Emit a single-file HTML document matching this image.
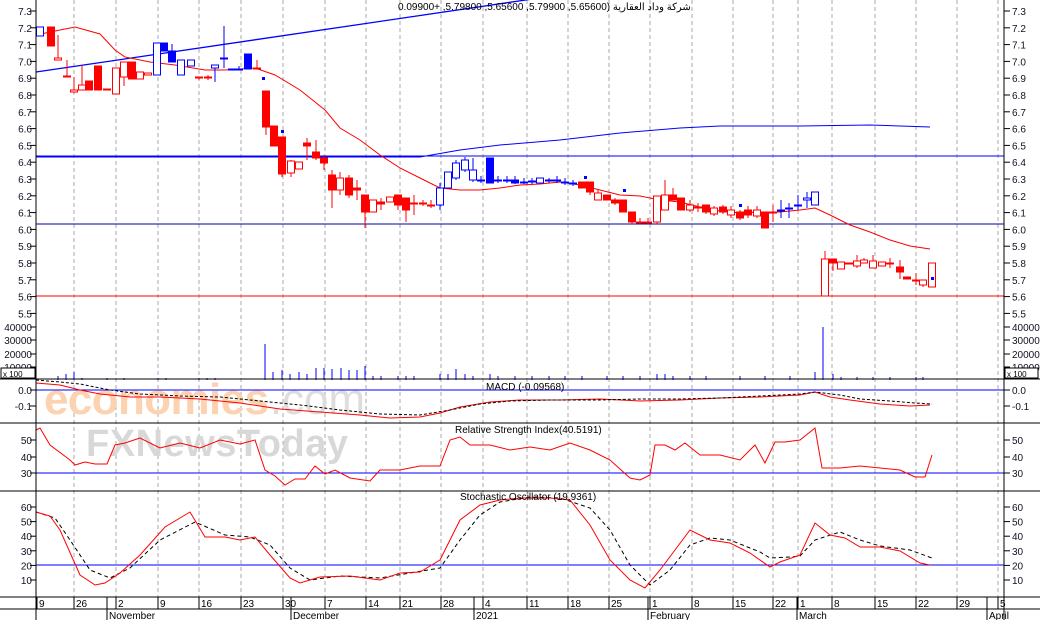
<!DOCTYPE html>
<html><head><meta charset="utf-8"><style>
html,body{margin:0;padding:0;background:#fff;}
svg{display:block;font-family:"Liberation Sans","Noto Sans CJK SC",sans-serif;}
</style></head><body>
<svg id="c" width="1040" height="620" xmlns="http://www.w3.org/2000/svg">
<rect width="1040" height="620" fill="#fff"/>
<g id="grid" stroke="#aaa" stroke-dasharray="4,3" stroke-width="1"></g>
<g>
<text x="44" y="414" fill="#fcd2b0" font-size="44" font-weight="bold" textLength="225">economies</text>
<text x="270" y="414" fill="#dddddd" font-size="44" textLength="95">.com</text>
<text x="86" y="456" fill="#d8d8d8" font-size="38" font-weight="bold" textLength="262">FXNewsToday</text>
</g>
<g id="main"></g>
<g id="axes" stroke="#000" stroke-width="1" fill="none"></g>
<g id="lbl" font-size="10" fill="#112"></g>
<text x="398" y="10" font-size="10" fill="#000">0.09900+ ,5.79800 ,5.65600 ,5.79900 ,5.65600) شركة وداد العقارية</text>
<text x="486" y="390" font-size="10" fill="#000">MACD (-0.09568)</text>
<text x="455" y="433" font-size="10" fill="#000">Relative Strength Index(40.5191)</text>
<text x="460" y="500" font-size="10" fill="#000">Stochastic Oscillator (19.9361)</text>
<rect x="1" y="368" width="34" height="10" fill="#fff" stroke="#000"/>
<text x="3" y="377" font-size="8">x 100</text>
<rect x="1005" y="368" width="33" height="10" fill="#fff" stroke="#000"/>
<text x="1007" y="377" font-size="8">x 100</text>
</svg>
<script>
var NS="http://www.w3.org/2000/svg";
function el(p,t,a,txt){var e=document.createElementNS(NS,t);for(var k in a)e.setAttribute(k,a[k]);if(txt!=null)e.textContent=txt;document.getElementById(p).appendChild(e);return e;}
var gx=[37,74,116,158,199,241,283,325,366,400,441,483,527,568,609,650,692,733,773,798,832,875,916,957,998];
gx.forEach(function(x){if(x>40&&x<1000)el('grid','line',{x1:x,y1:0,x2:x,y2:597});});
function pl(pts,col,dash,w){el('main','polyline',{points:pts.map(function(p){return p.join(',')}).join(' '),fill:'none',stroke:col,'stroke-width':w||1,'stroke-dasharray':dash||''});}
pl([[36,156],[1004,156]],'#00f');
pl([[36,224],[1004,224]],'#00a');
pl([[36,296],[1004,296]],'#f00');
pl([[36,72],[580,-8]],'#00f',null,1.3);
pl([[36,157],[420,157],[460,150],[500,145],[560,140],[620,133],[680,128],[720,126],[800,126],[870,125],[930,127]],'#00f');
pl([[36,35],[60,30],[75,27],[100,34],[115,50],[125,57],[150,62],[175,65],[205,70],[225,70],[255,68],[275,75],[300,90],[325,110],[340,128],[360,140],[380,155],[400,168],[420,178],[440,188],[460,190],[480,190],[500,188],[520,185],[540,184],[560,182],[580,185],[600,190],[620,195],[640,196],[660,200],[680,202],[700,207],[720,211],[740,213],[760,212],[780,212],[800,210],[815,208],[830,215],[850,225],[870,232],[890,240],[910,246],[930,249]],'#f00');
var C=[[40,27,36,27,36,'bh'],[51,27,46,27,46,'rf'],[58,58,60,35,60,'rh'],[67,76,77,60,77,'rf'],[74,90,92,77,93,'rh'],[82,85,90,65,90,'rh'],[89,81,90,81,90,'rf'],[98,66,90,66,90,'rf'],[107,89,90,89,90,'rf'],[116,68,94,68,94,'rh'],[124,62,77,62,86,'rh'],[132,62,79,62,79,'rf'],[140,72,79,72,79,'rh'],[148,73,75,73,75,'rh'],[157,43,75,43,75,'bh'],[164,43,51,43,51,'bf'],[172,51,62,44,62,'bf'],[181,60,75,60,75,'bh'],[191,60,66,60,66,'bh'],[199,77,78,77,80,'rf'],[208,77,78,75,80,'rf'],[215,65,68,65,82,'bh'],[224,58,59,26,68,'bf'],[232,69,70,69,70,'bf'],[239,69,70,66,70,'bf'],[248,54,69,54,69,'bf'],[257,68,69,60,69,'rf'],[266,91,127,91,135,'rf'],[274,126,146,126,146,'rf'],[282,137,174,137,177,'rf'],[291,161,173,160,177,'rh'],[299,162,169,162,169,'rh'],[307,143,146,138,160,'rf'],[316,152,158,140,160,'rf'],[324,158,163,155,170,'rf'],[332,175,190,170,208,'rf'],[340,178,190,172,195,'rh'],[349,178,195,175,198,'rf'],[357,188,190,180,200,'rf'],[365,195,212,195,228,'rf'],[373,200,212,200,212,'rh'],[381,202,204,198,210,'rf'],[390,197,202,197,202,'rh'],[398,195,205,195,210,'rf'],[406,198,210,198,222,'rf'],[414,203,204,195,215,'rf'],[423,203,204,200,206,'rf'],[431,205,206,200,208,'rf'],[440,188,205,183,210,'bh'],[448,172,188,172,188,'bh'],[456,163,178,160,180,'bh'],[465,160,170,157,172,'bh'],[473,170,180,158,182,'bh'],[481,180,181,176,183,'bf'],[490,158,183,158,183,'bf'],[498,180,181,176,183,'bf'],[507,180,181,176,183,'bf'],[515,180,183,176,184,'bf'],[524,182,183,178,184,'bf'],[532,181,182,178,184,'bf'],[540,178,183,178,183,'bh'],[549,180,181,178,183,'bf'],[557,180,181,176,183,'bf'],[565,182,183,178,185,'bf'],[573,183,184,180,186,'bf'],[582,182,188,182,188,'rf'],[590,182,192,182,195,'rf'],[598,193,200,190,200,'rh'],[607,195,200,195,200,'rf'],[615,200,203,198,205,'rf'],[623,200,212,200,212,'rf'],[632,212,222,212,224,'rf'],[640,222,223,218,224,'rf'],[648,222,223,218,224,'rf'],[657,196,222,196,224,'rh'],[665,195,210,180,210,'rh'],[673,195,200,188,200,'rf'],[681,198,210,198,210,'rf'],[690,205,210,200,212,'rh'],[698,207,208,203,212,'rf'],[706,205,212,205,214,'rf'],[714,208,214,206,216,'rh'],[723,207,212,205,214,'rf'],[731,210,215,206,218,'rh'],[740,212,218,210,220,'rf'],[748,210,215,206,218,'rf'],[757,210,216,206,218,'rh'],[765,213,228,213,228,'rf'],[773,212,213,205,222,'rf'],[781,210,211,200,218,'bf'],[789,208,209,203,218,'bf'],[798,205,206,195,210,'bf'],[807,198,200,192,208,'bh'],[815,192,205,192,205,'bh'],[825,259,296,251,296,'rh'],[833,259,263,259,271,'rf'],[841,262,269,262,269,'rh'],[849,263,264,263,264,'rf'],[857,261,266,255,268,'rh'],[864,260,263,258,263,'rh'],[873,261,268,255,268,'rh'],[882,262,266,262,266,'rh'],[890,263,264,258,268,'rf'],[900,267,272,260,279,'rf'],[907,277,279,277,279,'rf'],[916,280,281,273,285,'rf'],[923,280,285,280,287,'rh'],[932,263,287,263,287,'rh']];
C.forEach(function(c){var col=c[5][0]=='r'?'#f00':'#00f';var fill=c[5][1]=='f'?col:'#fff';
el('main','line',{x1:c[0],y1:c[3],x2:c[0],y2:c[4],stroke:col});
el('main','rect',{x:c[0]-3.5,y:c[1],width:7,height:Math.max(1,c[2]-c[1]),fill:fill,stroke:col});});
[[263,78],[282,131],[585,177],[624,190],[740,205],[932,278]].forEach(function(p){el('main','rect',{x:p[0]-1,y:p[1]-1,width:3,height:3,fill:'#00f'});});
var V=[[58,376],[66,374],[74,372],[82,378],[107,378],[124,378],[158,378],[166,378],[199,378],[207,378],[215,378],[265,344],[273,372],[282,370],[290,374],[299,372],[307,374],[316,368],[324,368],[332,369],[341,368],[349,370],[357,370],[365,366],[373,376],[381,376],[398,376],[406,376],[414,376],[440,374],[448,374],[456,369],[465,374],[473,376],[490,374],[498,376],[515,376],[532,376],[549,376],[565,376],[582,376],[607,376],[623,376],[640,376],[657,374],[665,374],[673,376],[690,376],[706,376],[740,376],[765,376],[790,376],[815,372],[823,327],[833,374],[841,377],[857,377],[873,377],[890,377],[916,377],[923,377]];
V.forEach(function(v){el('main','line',{x1:v[0],y1:380,x2:v[0],y2:v[1],stroke:'#00f'});});
pl([[36,390],[1004,390]],'#00f');
pl([[36,383],[60,385],[80,390],[100,394],[130,397],[160,397],[200,399],[240,403],[280,409],[320,412],[360,415],[390,418],[420,417],[440,413],[460,407],[490,402],[520,400],[560,400],[600,399],[640,401],[680,400],[720,398],[760,397],[800,395],[815,392],[830,397],[850,400],[880,404],[910,406],[930,405]],'#f00');
pl([[36,380],[60,382],[80,384],[110,390],[140,394],[180,396],[220,397],[260,401],[300,405],[340,410],[380,414],[420,415],[450,410],[480,404],[510,401],[550,400],[600,400],[640,399],[680,399],[720,398],[760,396],[800,394],[815,392],[840,395],[860,399],[890,401],[915,403],[932,404]],'#000','3,2');
pl([[36,473],[1004,473]],'#00f');
pl([[36,430],[40,428],[50,445],[70,460],[75,465],[85,462],[95,464],[107,464],[115,445],[125,443],[140,438],[160,448],[180,443],[200,448],[220,440],[240,444],[255,440],[265,470],[275,476],[285,485],[295,479],[305,479],[315,466],[325,474],[335,470],[350,478],[370,481],[380,470],[400,470],[420,466],[440,466],[450,440],[460,437],[470,445],[490,445],[510,450],[530,447],[550,450],[570,443],[590,450],[610,460],[630,478],[640,480],[650,475],[655,445],[665,445],[675,450],[685,443],[700,455],[720,455],[740,460],[755,445],[765,463],[775,442],[785,442],[800,440],[815,428],[822,468],[840,468],[860,466],[880,468],[900,470],[915,477],[925,477],[932,455]],'#f00');
pl([[36,565],[1004,565]],'#00f');
pl([[36,512],[55,518],[70,540],[90,570],[110,578],[130,568],[160,540],[195,522],[225,535],[250,537],[270,545],[290,568],[310,580],[340,576],[380,578],[410,573],[440,568],[460,540],[480,515],[500,502],[530,497],[560,498],[590,508],[610,530],[630,565],[650,585],[670,570],[690,545],[710,538],[730,540],[760,552],[770,558],[790,557],[800,556],[815,540],[840,532],[860,540],[880,546],[910,550],[932,558]],'#000','4,3');
pl([[36,512],[50,516],[60,530],[80,575],[95,585],[105,583],[120,573],[140,555],[165,527],[190,512],[205,537],[225,537],[240,540],[255,537],[270,555],[290,578],[300,583],[320,577],[350,576],[380,580],[400,573],[420,572],[440,560],[460,520],[480,505],[500,500],[520,498],[550,498],[570,500],[590,525],[610,560],[630,580],[645,588],[660,570],[690,530],[710,540],[730,543],[750,553],[770,567],[780,562],[800,555],[815,523],[830,535],[845,538],[860,547],[880,547],[900,551],[920,563],[930,565]],'#f00');
function ax(a){el('axes','line',a);}
ax({x1:36,y1:0,x2:36,y2:620});ax({x1:1004,y1:0,x2:1004,y2:620});
[379,423,491,597,609].forEach(function(y){ax({x1:0,y1:y,x2:1040,y2:y});});
function lab(y,t){el('lbl','text',{x:32,y:y+4,'text-anchor':'end'},t);el('lbl','text',{x:1012,y:y+4},t);ax({x1:30,y1:y,x2:36,y2:y});ax({x1:1004,y1:y,x2:1010,y2:y});}
for(var i=0;i<=18;i++){var p=7.3-i*0.1;lab(11+i*16.8,p.toFixed(1));}
[[327,'40000'],[340,'30000'],[354,'20000'],[367,'10000']].forEach(function(a){lab(a[0],a[1]);});
lab(390,'0.0');lab(406,'-0.1');
lab(440,'50');lab(457,'40');lab(473,'30');
[60,50,40,30,20,10].forEach(function(v,i){lab(507+i*14.6,String(v));});
var D=[[37,'9'],[74,'26'],[116,'2'],[158,'9'],[199,'16'],[241,'23'],[283,'30'],[325,'7'],[366,'14'],[400,'21'],[441,'28'],[483,'4'],[527,'11'],[568,'18'],[609,'25'],[650,'1'],[692,'8'],[733,'15'],[773,'22'],[798,'1'],[832,'8'],[875,'15'],[916,'22'],[957,'29'],[998,'5']];
D.forEach(function(d){ax({x1:d[0],y1:597,x2:d[0],y2:609});el('lbl','text',{x:d[0]+2,y:607,fill:'#000'},d[1]);});
[[107,'November'],[291,'December'],[474,'2021'],[648,'February'],[797,'March'],[987,'April']].forEach(function(m){ax({x1:m[0],y1:597,x2:m[0],y2:620});el('lbl','text',{x:m[0]+2,y:619,fill:'#000'},m[1]);});
</script>
</body></html>
